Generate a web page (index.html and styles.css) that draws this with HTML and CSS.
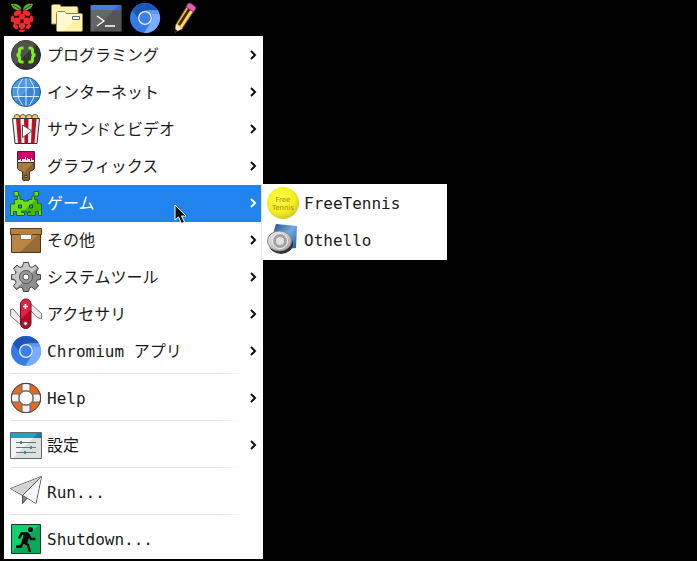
FILE: index.html
```html
<!DOCTYPE html>
<html lang="ja">
<head>
    <meta charset="UTF-8">
    <meta name="viewport" content="width=device-width, initial-scale=1.0">
    <title>Desktop Menu</title>
    <link rel="stylesheet" href="styles.css">
</head>
<body>

<header class="taskbar">
    <button class="launcher menu-button" aria-label="Menu">
        <svg class="icon" viewBox="0 0 32 32">
            <path d="M14.500 8.500C9 9 5 6.500 4 2C9 .8 14 2.500 14.500 8.500zM16 8.500C16.500 2.500 21 .8 26 2C25 6.500 21 9 16 8.500z" fill="#5fae2e"/>
            <path d="M6 3L14 8M24 3L16.500 8" stroke="#254d12" fill="none"/>
            <path d="M15 8C23 7 26 13 26 19C25 26 19 30 15 30C11 30 5 26 4 19C4 13 7 7 15 8z" fill="#30070b"/>
            <g fill="#f02a2f">
                <ellipse cx="10.500" cy="11" rx="4" ry="2.500" transform="rotate(-28 10.500 11)"/>
                <ellipse cx="19.500" cy="11" rx="4" ry="2.500" transform="rotate(28 19.500 11)"/>
                <circle cx="15" cy="14.800" r="3"/>
                <circle cx="10" cy="19" r="3.600"/>
                <circle cx="20" cy="19" r="3.600"/>
                <ellipse cx="5.500" cy="17" rx="1.700" ry="3.300"/>
                <ellipse cx="24.500" cy="17" rx="1.700" ry="3.300"/>
                <circle cx="15" cy="23.800" r="3.100"/>
                <ellipse cx="8.500" cy="24.500" rx="2" ry="3" transform="rotate(-38 8.500 24.500)"/>
                <ellipse cx="21.500" cy="24.500" rx="2" ry="3" transform="rotate(38 21.500 24.500)"/>
                <ellipse cx="15" cy="28.800" rx="3" ry="1.400"/>
            </g>
        </svg>
    </button>
    <button class="launcher" aria-label="File Manager">
        <svg class="icon" viewBox="0 0 32 32">
            <path d="M.5 22V4.500Q.5 2.500 2.500 2.500H8Q10 2.500 10 4.500H25.500Q27 4.500 27 6V22z" fill="#fff3b0" stroke="#8d8354"/>
            <path d="M5.500 28V11.500Q5.500 9.500 7.500 9.500H13Q15 9.500 15 11.500H30.500Q31.500 11.500 31.500 13V28Q31.500 29.500 30 29.500H7Q5.500 29.500 5.500 28z" fill="#fff1a8" stroke="#8d8354"/>
            <path d="M6 10H14L15 12H30L12 29H6z" fill="#fff9d0"/>
            <path d="M21.500 14.500H28.500V17.500H21.500z" fill="#fff" stroke="#667"/>
        </svg>
    </button>
    <button class="launcher" aria-label="Terminal">
        <svg class="icon" viewBox="0 0 32 32">
            <path d="M.5 3.500H31.500V29.500H.5z" fill="#555" stroke="#333"/>
            <path d="M1 8H24L3 29H1z" fill="#666"/>
            <path d="M1 3H31V8H1z" fill="#3265d5"/>
            <path d="M1 3H29L24 8H1z" fill="#4779e8"/>
            <path d="M7 14L14 19L7 24M15 24H25" fill="none" stroke="#fff" stroke-width="1.300"/>
        </svg>
    </button>
    <button class="launcher" aria-label="Chromium">
        <svg class="icon" viewBox="0 0 32 32">
            <use href="#chromium"/>
        </svg>
    </button>
    <button class="launcher" aria-label="Editor">
        <svg class="icon" viewBox="0 0 32 32">
            <path d="M8 22L19 4L26 9L14 27L7 30z" fill="#f6b832" stroke="#5c4310"/>
            <path d="M11 23L22 6" stroke="#382711" stroke-width="2.500"/>
            <path d="M13 25L24 8" stroke="#ffe07a" stroke-width="1.500"/>
            <path d="M18 5L20 1.500Q21 .5 23 1.500L27 4.500Q28.500 5.500 27.500 7L25.500 10z" fill="#d963b8" stroke="#812b6b"/>
            <path d="M8 22L14 26.500L7 30.500z" fill="#f7e7c7"/>
            <path d="M7 27L10 29L7 31z" fill="#222"/>
        </svg>
    </button>
</header>

<nav aria-label="メインメニュー">
    <ul class="menu">
        <li>
            <button class="item">
                <svg class="icon" viewBox="0 0 32 32">
                    <circle cx="16" cy="16" r="14.500" fill="#353535" stroke="#222"/>
                    <path d="M5.500 26A14.200 14.200 0 0 1 26 5.500z" fill="#515151"/>
                    <path d="M13.500 9H12Q9.500 9 9.500 11V13Q9.500 16 6.500 16Q9.500 16 9.500 19V21Q9.500 23 12 23H13.500M18.500 9H20Q22.500 9 22.500 11V13Q22.500 16 25.500 16Q22.500 16 22.500 19V21Q22.500 23 20 23H18.500" fill="none" stroke="#83ef18" stroke-width="3"/>
                </svg>
                <span class="label">プログラミング</span>
                <svg class="arrow" viewBox="0 0 8 10"><path d="M2 1L6 5L2 9"/></svg>
            </button>
        </li>
        <li>
            <button class="item">
                <svg class="icon" viewBox="0 0 32 32">
                    <circle cx="16" cy="16" r="14.500" fill="#3b83d4"/>
                    <path d="M5.500 26A14.200 14.200 0 0 1 26 5.500z" fill="#5198e5"/>
                    <path d="M2 11.500H30M2 20.500H30M16 2V30M13 2Q2 16 13 30M19 2Q30 16 19 30" fill="none" stroke="#d4e9ff"/>
                    <circle cx="16" cy="16" r="14.500" fill="none" stroke="#235a98"/>
                </svg>
                <span class="label">インターネット</span>
                <svg class="arrow" viewBox="0 0 8 10"><path d="M2 1L6 5L2 9"/></svg>
            </button>
        </li>
        <li>
            <button class="item">
                <svg class="icon" viewBox="0 0 32 32">
                    <g fill="#f8cf6c" stroke="#6d5528">
                        <circle cx="7" cy="4.500" r="3"/><circle cx="13" cy="4.500" r="3"/>
                        <circle cx="19" cy="4.500" r="3"/><circle cx="25" cy="4.500" r="3"/>
                    </g>
                    <path d="M2.500 5.500H29.500L27 30.500H5z" fill="#f2f2f2"/>
                    <path d="M6 6H10.500L11.500 30H8zM14 6H18.500L18 30H14.500zM22 6H26.500L24.500 30H21z" fill="#bd1028"/>
                    <path d="M2.500 5.500H29.500L27 30.500H5z" fill="none" stroke="#333"/>
                    <path d="M12.500 12V24.500L22 18z" fill="#fff" stroke="#555"/>
                </svg>
                <span class="label">サウンドとビデオ</span>
                <svg class="arrow" viewBox="0 0 8 10"><path d="M2 1L6 5L2 9"/></svg>
            </button>
        </li>
        <li>
            <button class="item">
                <svg class="icon" viewBox="0 0 32 32">
                    <path d="M7.500 1.500H24.500V12.500H7.500z" fill="#f3ece3" stroke="#333"/>
                    <path d="M8 2H24V10H22V8H21V11H20V9H18V8H17V10H16V7H15V9H12V11H11V9H10V10H8z" fill="#cf0069"/>
                    <path d="M7.500 13H24.500V18Q24.500 20 19.500 21.500V29Q19.500 30.500 18 30.500H14Q12.500 30.500 12.500 29V21.500Q7.500 20 7.500 18z" fill="#89602f" stroke="#47351e"/>
                    <path d="M8 13H23L14 23L12 21L8 19z" fill="#aa7a42"/>
                    <path d="M15 25.500H17V27.500H15z" fill="#fff" stroke="#47351e"/>
                </svg>
                <span class="label">グラフィックス</span>
                <svg class="arrow" viewBox="0 0 8 10"><path d="M2 1L6 5L2 9"/></svg>
            </button>
        </li>
        <li class="open">
            <button class="item" aria-expanded="true">
                <svg class="icon" viewBox="0 0 32 32">
                    <path d="M4 4.500H8.500V9H10V12.500H13.500V14H18.500V12.500H22V9H24V4.500H28.500V9H24.500V12.500H27.500V17H31.500V28.500H28.500V24.500H25.500V28.500H17.500V25.500H20.500V24H11.500V25.500H14.500V28.500H6.500V24.500H3.500V28.500H.5V17H4.500V12.500H7.500V9H4z" fill="#6be01b" stroke="#25690b"/>
                    <path d="M27 13V17.500H31V24H25V28H18V26H21V23.500H14L25 13z" fill="#49b90c"/>
                    <path d="M8.500 18H11.500V21H8.500zM19.500 18H22.500V21H19.500z" fill="#3290f0" stroke="#1d5212"/>
                </svg>
                <span class="label">ゲーム</span>
                <svg class="arrow" viewBox="0 0 8 10"><path d="M2 1L6 5L2 9"/></svg>
            </button>
            <ul class="submenu">
                <li>
                    <button class="item">
                        <svg class="icon" viewBox="0 0 32 32">
                            <defs>
                                <radialGradient id="ball" cx=".4" cy=".35" r=".65">
                                    <stop offset="0" stop-color="#ffff42"/>
                                    <stop offset=".7" stop-color="#f3ed20"/>
                                    <stop offset="1" stop-color="#d5ce20"/>
                                </radialGradient>
                            </defs>
                            <circle cx="16" cy="16" r="16" fill="url(#ball)"/>
                            <text class="ball-text" x="16" y="15">Free</text>
                            <text class="ball-text" x="16" y="23">Tennis</text>
                        </svg>
                        <span class="label">FreeTennis</span>
                    </button>
                </li>
                <li>
                    <button class="item">
                        <svg class="icon" viewBox="0 0 32 32">
                            <defs>
                                <linearGradient id="blue" x1="0" x2="1" y1="0" y2="1">
                                    <stop offset="0" stop-color="#184b87"/>
                                    <stop offset=".5" stop-color="#72a9de"/>
                                    <stop offset="1" stop-color="#1b5aa0"/>
                                </linearGradient>
                                <linearGradient id="metal" x1="0" x2="1" y1="0" y2="1">
                                    <stop offset="0" stop-color="#ededed"/>
                                    <stop offset="1" stop-color="#a6a6a6"/>
                                </linearGradient>
                            </defs>
                            <path d="M9 0L30 2L29 24L20 25L5 13z" fill="url(#blue)"/>
                            <ellipse cx="14" cy="20" rx="12" ry="10" fill="#303030"/>
                            <ellipse cx="12.500" cy="17" rx="12" ry="10" fill="url(#metal)" stroke="#888"/>
                            <circle cx="13" cy="17" r="7.500" fill="#a2a2a2" stroke="#f4f4f4"/>
                            <circle cx="13" cy="17" r="4" fill="#e2e2e2"/>
                        </svg>
                        <span class="label">Othello</span>
                    </button>
                </li>
            </ul>
            <svg class="pointer" viewBox="0 0 14 21">
                <path d="M1 1V16L4.500 13L7.500 19.500L10.500 18L7.500 12H12z" fill="#111" stroke="#fff"/>
            </svg>
        </li>
        <li>
            <button class="item">
                <svg class="icon" viewBox="0 0 32 32">
                    <path d="M1.500 10H30.500V28.500H1.500z" fill="#986b34" stroke="#4e351a"/>
                    <path d="M2 10H29L10 28H2z" fill="#b98646"/>
                    <path d="M.5 4.500H31.500V10.500H.5z" fill="#b98148" stroke="#5d3c1b"/>
                    <path d="M10.500 10.500H21.500V15.500H10.500z" fill="#fff" stroke="#8c7455"/>
                </svg>
                <span class="label">その他</span>
                <svg class="arrow" viewBox="0 0 8 10"><path d="M2 1L6 5L2 9"/></svg>
            </button>
        </li>
        <li>
            <button class="item">
                <svg class="icon" viewBox="0 0 32 32">
                    <path d="M13.500 1.500H18.500L19.500 5.500L22 6.500L25.500 4L28.500 7.500L26 11L27 13.500H30.500V18.500L27 19L26 21.500L28.500 25L25 28.500L21.500 26L19.500 27L18.500 30.500H13.500L12.500 27L10 26L6.500 28.500L3.500 25L6 21.500L5 19L1.500 18.500V13.500H5L6 11L3.500 7.500L7 4L10 6.500L12.500 5.500z" fill="#8d8d8d" stroke="#444"/>
                    <path d="M14 2H18L19 6L22 7L25 5L27 7L7 27L4 25L7 21L5 18L2 17V14L6 13L7 11L4 8L7 5L10 7L13 6z" fill="#c8c8c8"/>
                    <circle cx="16" cy="16" r="6.500" fill="#999" stroke="#555"/>
                    <circle cx="16" cy="16" r="3" fill="#fff" stroke="#555"/>
                </svg>
                <span class="label">システムツール</span>
                <svg class="arrow" viewBox="0 0 8 10"><path d="M2 1L6 5L2 9"/></svg>
            </button>
        </li>
        <li>
            <button class="item">
                <svg class="icon" viewBox="0 0 32 32">
                    <path d="M11 27L0.500 18V11.500L3 11L11 20zM20 5L31.500 15.500V20.500L28 20L20 12z" fill="#ededed" stroke="#777"/>
                    <rect x="10.500" y="1" width="10.500" height="29.500" rx="5.200" fill="#b70829" stroke="#661222"/>
                    <path d="M11 21V6Q11 1.500 16 1.500Q20.500 1.500 20.500 6V12z" fill="#dc2342"/>
                    <path d="M15.500 6V11M13 8.500H18" stroke="#fff" stroke-width="1.700"/>
                    <circle cx="15.500" cy="25.500" r="2" fill="#ddd" stroke="#555"/>
                </svg>
                <span class="label">アクセサリ</span>
                <svg class="arrow" viewBox="0 0 8 10"><path d="M2 1L6 5L2 9"/></svg>
            </button>
        </li>
        <li>
            <button class="item">
                <svg class="icon" viewBox="0 0 32 32">
                    <g id="chromium">
                        <circle cx="16" cy="16" r="15" fill="#347ae8"/>
                        <path d="M3 8.500A15 15 0 0 1 29 8.500H16Q10 9 9 16z" fill="#1b57b9"/>
                        <path d="M29 8.500A15 15 0 0 1 15 31L22.500 19Q25 13 19.500 8.500z" fill="#78adff"/>
                        <path d="M16 8.500H29L30 12H20z" fill="#6196ed"/>
                        <circle cx="16" cy="16" r="6.300" fill="#3b7fe9" stroke="#e8f1ff" stroke-width="1.300"/>
                    </g>
                </svg>
                <span class="label">Chromium アプリ</span>
                <svg class="arrow" viewBox="0 0 8 10"><path d="M2 1L6 5L2 9"/></svg>
            </button>
        </li>
        <li class="separator" role="separator"></li>
        <li>
            <button class="item">
                <svg class="icon" viewBox="0 0 32 32">
                    <circle cx="16" cy="16" r="11" fill="none" stroke="#db6b25" stroke-width="8"/>
                    <path d="M12 1.500H20V9H12zM12 23H20V30.500H12zM1.500 12H9V20H1.500zM23 12H30.500V20H23z" fill="#f4f4f4" stroke="#666"/>
                    <circle cx="16" cy="16" r="14.700" fill="none" stroke="#444"/>
                    <circle cx="16" cy="16" r="7" fill="#fff" stroke="#555"/>
                </svg>
                <span class="label">Help</span>
                <svg class="arrow" viewBox="0 0 8 10"><path d="M2 1L6 5L2 9"/></svg>
            </button>
        </li>
        <li class="separator" role="separator"></li>
        <li>
            <button class="item">
                <svg class="icon" viewBox="0 0 32 32">
                    <path d="M.5 3.500H31.500V29.500H.5z" fill="#dce0e0" stroke="#666"/>
                    <path d="M1 9H23L3 29H1z" fill="#f5f5f5"/>
                    <path d="M1 4H31V9H1z" fill="#13809e"/>
                    <path d="M1 4H28L23 9H1z" fill="#21a2c4"/>
                    <path d="M6 13.500H26M6 18.500H26M6 23.500H26" stroke="#737373"/>
                    <path d="M10 12H12V15H10zM20 17H22V20H20zM14 22H16V25H14z" fill="#169bc0"/>
                </svg>
                <span class="label">設定</span>
                <svg class="arrow" viewBox="0 0 8 10"><path d="M2 1L6 5L2 9"/></svg>
            </button>
        </li>
        <li class="separator" role="separator"></li>
        <li>
            <button class="item">
                <svg class="icon" viewBox="0 0 32 32">
                    <path d="M31.500 .5L.5 12.500L12.500 19.500V27.500L17 22L26 27.500z" fill="#f4f4f4" stroke="#555" stroke-linejoin="round"/>
                    <path d="M31 1L1 12.500L12.500 19z" fill="#d3d3d3"/>
                    <path d="M31.500 .5L12.500 19.500L17 22L12.500 27.500V19.500" fill="#888" stroke="#555"/>
                    <path d="M31 1L15 20L25.500 27z" fill="#f8f8f8"/>
                </svg>
                <span class="label">Run...</span>
            </button>
        </li>
        <li class="separator" role="separator"></li>
        <li>
            <button class="item">
                <svg class="icon" viewBox="0 0 32 32">
                    <path d="M1.500 1.500H30.500V30.500H1.500z" fill="#0aa95a" stroke="#143b27"/>
                    <path d="M2 2H29L2 29z" fill="#10cf6e"/>
                    <circle cx="20.500" cy="6.500" r="2.600" fill="#080808"/>
                    <path d="M16 10L12.500 20L11 23.500H6M13.500 19L18 22L20 29M9 15.500L11.500 10.500H17.500L21 16H25.500" fill="none" stroke="#080808" stroke-width="2.400"/>
                    <path d="M14 9.500L20 11L17 21L12 20z" fill="#080808"/>
                </svg>
                <span class="label">Shutdown...</span>
            </button>
        </li>
    </ul>
</nav>

</body>
</html>
```
FILE: styles.css
```css
body {
    margin: 0;
    background-color: #000;
    color: #1a1a1a;
    font-family: "DejaVu Sans Mono", "Noto Sans CJK JP", monospace;
    font-size: 16px;
}
button {
    border: 0;
    margin: 0;
    background: none;
    color: inherit;
    font: inherit;
    text-align: left;
}
ul {
    list-style: none;
    margin: 0;
    padding: 0;
}
.icon {
    display: block;
    flex: none;
    width: 32px;
    height: 32px;
}
.taskbar {
    display: flex;
    gap: 7px;
    padding: 2px 7px;
}
.launcher {
    padding: 0;
}
.menu-button {
    margin-right: 5px;
}
.menu {
    box-sizing: border-box;
    width: 259px;
    margin-left: 4px;
    padding: 1px;
    background-color: #fff;
}
.item {
    display: flex;
    align-items: center;
    gap: 5px;
    box-sizing: border-box;
    width: 100%;
    height: 37px;
    padding: 2px 5px 3px;
    line-height: 24px;
}
.label {
    flex: 1;
    padding-top: 2px;
    white-space: nowrap;
}
.arrow {
    width: 8px;
    height: 10px;
    fill: none;
    stroke: #111;
    stroke-width: 2;
}
.open {
    position: relative;
}
.open > .item {
    background-color: #2183ed;
    color: #fff;
}
.open > .item .arrow {
    stroke: #fff;
}
.submenu {
    position: absolute;
    top: -1px;
    left: calc(100% - 1px);
    width: 184px;
    border: 1px solid #fff;
    border-left-color: #e6e6e6;
    background-color: #fff;
}
.ball-text {
    font-family: "DejaVu Sans", sans-serif;
    font-size: 7px;
    fill: #a28a10;
    text-anchor: middle;
}
.pointer {
    position: absolute;
    top: 19px;
    left: 169px;
    width: 14px;
    height: 21px;
}
.separator {
    height: 1px;
    margin: 3px 14px 6px 5px;
    background: linear-gradient(to right, #e2e2e2 85%, #fff);
}
```
